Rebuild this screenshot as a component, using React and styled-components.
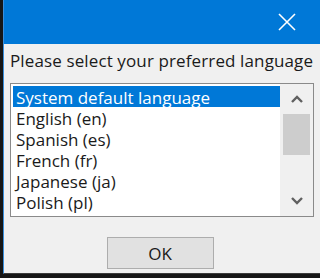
import React, { useState } from "react";
import styled, { createGlobalStyle } from "styled-components";

const GlobalStyle = createGlobalStyle`
  body {
    margin: 0;
    background: #161616;
    font-family: "Open Sans", "Liberation Sans", sans-serif;
  }
`;

const Window = styled.div`
  width: 316px;
  height: 273px;
  margin-left: 3px;
  border-left: 1px solid #3a8fdc;
  border-bottom: 1px solid #3c3c3c;
  display: flex;
  flex-direction: column;
  background: #f0f0f0;
`;

const TitleBar = styled.div`
  height: 44px;
  background: #0078d7;
  display: flex;
  justify-content: flex-end;
  align-items: center;
  flex-shrink: 0;
`;

const CloseButton = styled.div`
  width: 46px;
  height: 44px;
  display: flex;
  align-items: center;
  justify-content: center;
  margin-right: 10px;
`;

const Content = styled.div`
  flex: 1;
  display: flex;
  flex-direction: column;
  padding: 6px 6px 0 6px;
`;

const Prompt = styled.div`
  font-size: 17px;
  letter-spacing: 0.12px;
  color: #1a1a1a;
  line-height: 22px;
  margin-bottom: 11px;
  white-space: nowrap;
`;

const ListBox = styled.div`
  height: 132px;
  border: 1px solid #8a8a8a;
  background: #fff;
  display: flex;
`;

const Items = styled.div`
  flex: 1;
  padding: 2px 0 0 2px;
  overflow: hidden;
`;

const Item = styled.div`
  height: 21px;
  line-height: 23px;
  font-size: 17px;
  padding-left: 3px;
  white-space: nowrap;
  color: ${(p) => (p.$selected ? "#fff" : "#1a1a1a")};
  background: ${(p) => (p.$selected ? "#0078d7" : "transparent")};
`;

const ScrollBar = styled.div`
  width: 33px;
  background: #f0f0f0;
  display: flex;
  flex-direction: column;
  align-items: center;
`;

const Arrow = styled.div`
  height: 30px;
  width: 100%;
  display: flex;
  align-items: center;
  justify-content: center;
`;

const Thumb = styled.div`
  width: 27px;
  height: 41px;
  background: #cdcdcd;
`;

const Track = styled.div`
  flex: 1;
`;

const Footer = styled.div`
  display: flex;
  justify-content: center;
  padding-top: 20px;
`;

const OkButton = styled.button`
  width: 107px;
  height: 32px;
  border: 1px solid #adadad;
  background: #e1e1e1;
  font-family: inherit;
  font-size: 17px;
  color: #1a1a1a;
  padding: 0;
  margin-right: 4px;
`;

const languages = [
  "System default language",
  "English (en)",
  "Spanish (es)",
  "French (fr)",
  "Japanese (ja)",
  "Polish (pl)",
];

const Chevron = ({ up }) => (
  <svg width="14" height="10" viewBox="0 0 14 10">
    <path
      d={up ? "M2 8 L7 3 L12 8" : "M2 2 L7 7 L12 2"}
      fill="none"
      stroke="#606060"
      strokeWidth="2.4"
    />
  </svg>
);

const App = () => {
  const [selected, setSelected] = useState(0);

  return (
    <>
      <GlobalStyle />
      <Window>
        <TitleBar>
          <CloseButton>
            <svg width="18" height="18" viewBox="0 0 18 18">
              <path d="M1 1 L17 17 M17 1 L1 17" stroke="#fff" strokeWidth="1.6" />
            </svg>
          </CloseButton>
        </TitleBar>
        <Content>
          <Prompt>Please select your preferred language</Prompt>
          <ListBox>
            <Items>
              {languages.map((lang, i) => (
                <Item key={lang} $selected={i === selected} onClick={() => setSelected(i)}>
                  {lang}
                </Item>
              ))}
            </Items>
            <ScrollBar>
              <Arrow>
                <Chevron up />
              </Arrow>
              <Thumb />
              <Track />
              <Arrow>
                <Chevron />
              </Arrow>
            </ScrollBar>
          </ListBox>
          <Footer>
            <OkButton>OK</OkButton>
          </Footer>
        </Content>
      </Window>
    </>
  );
};

export default App;
